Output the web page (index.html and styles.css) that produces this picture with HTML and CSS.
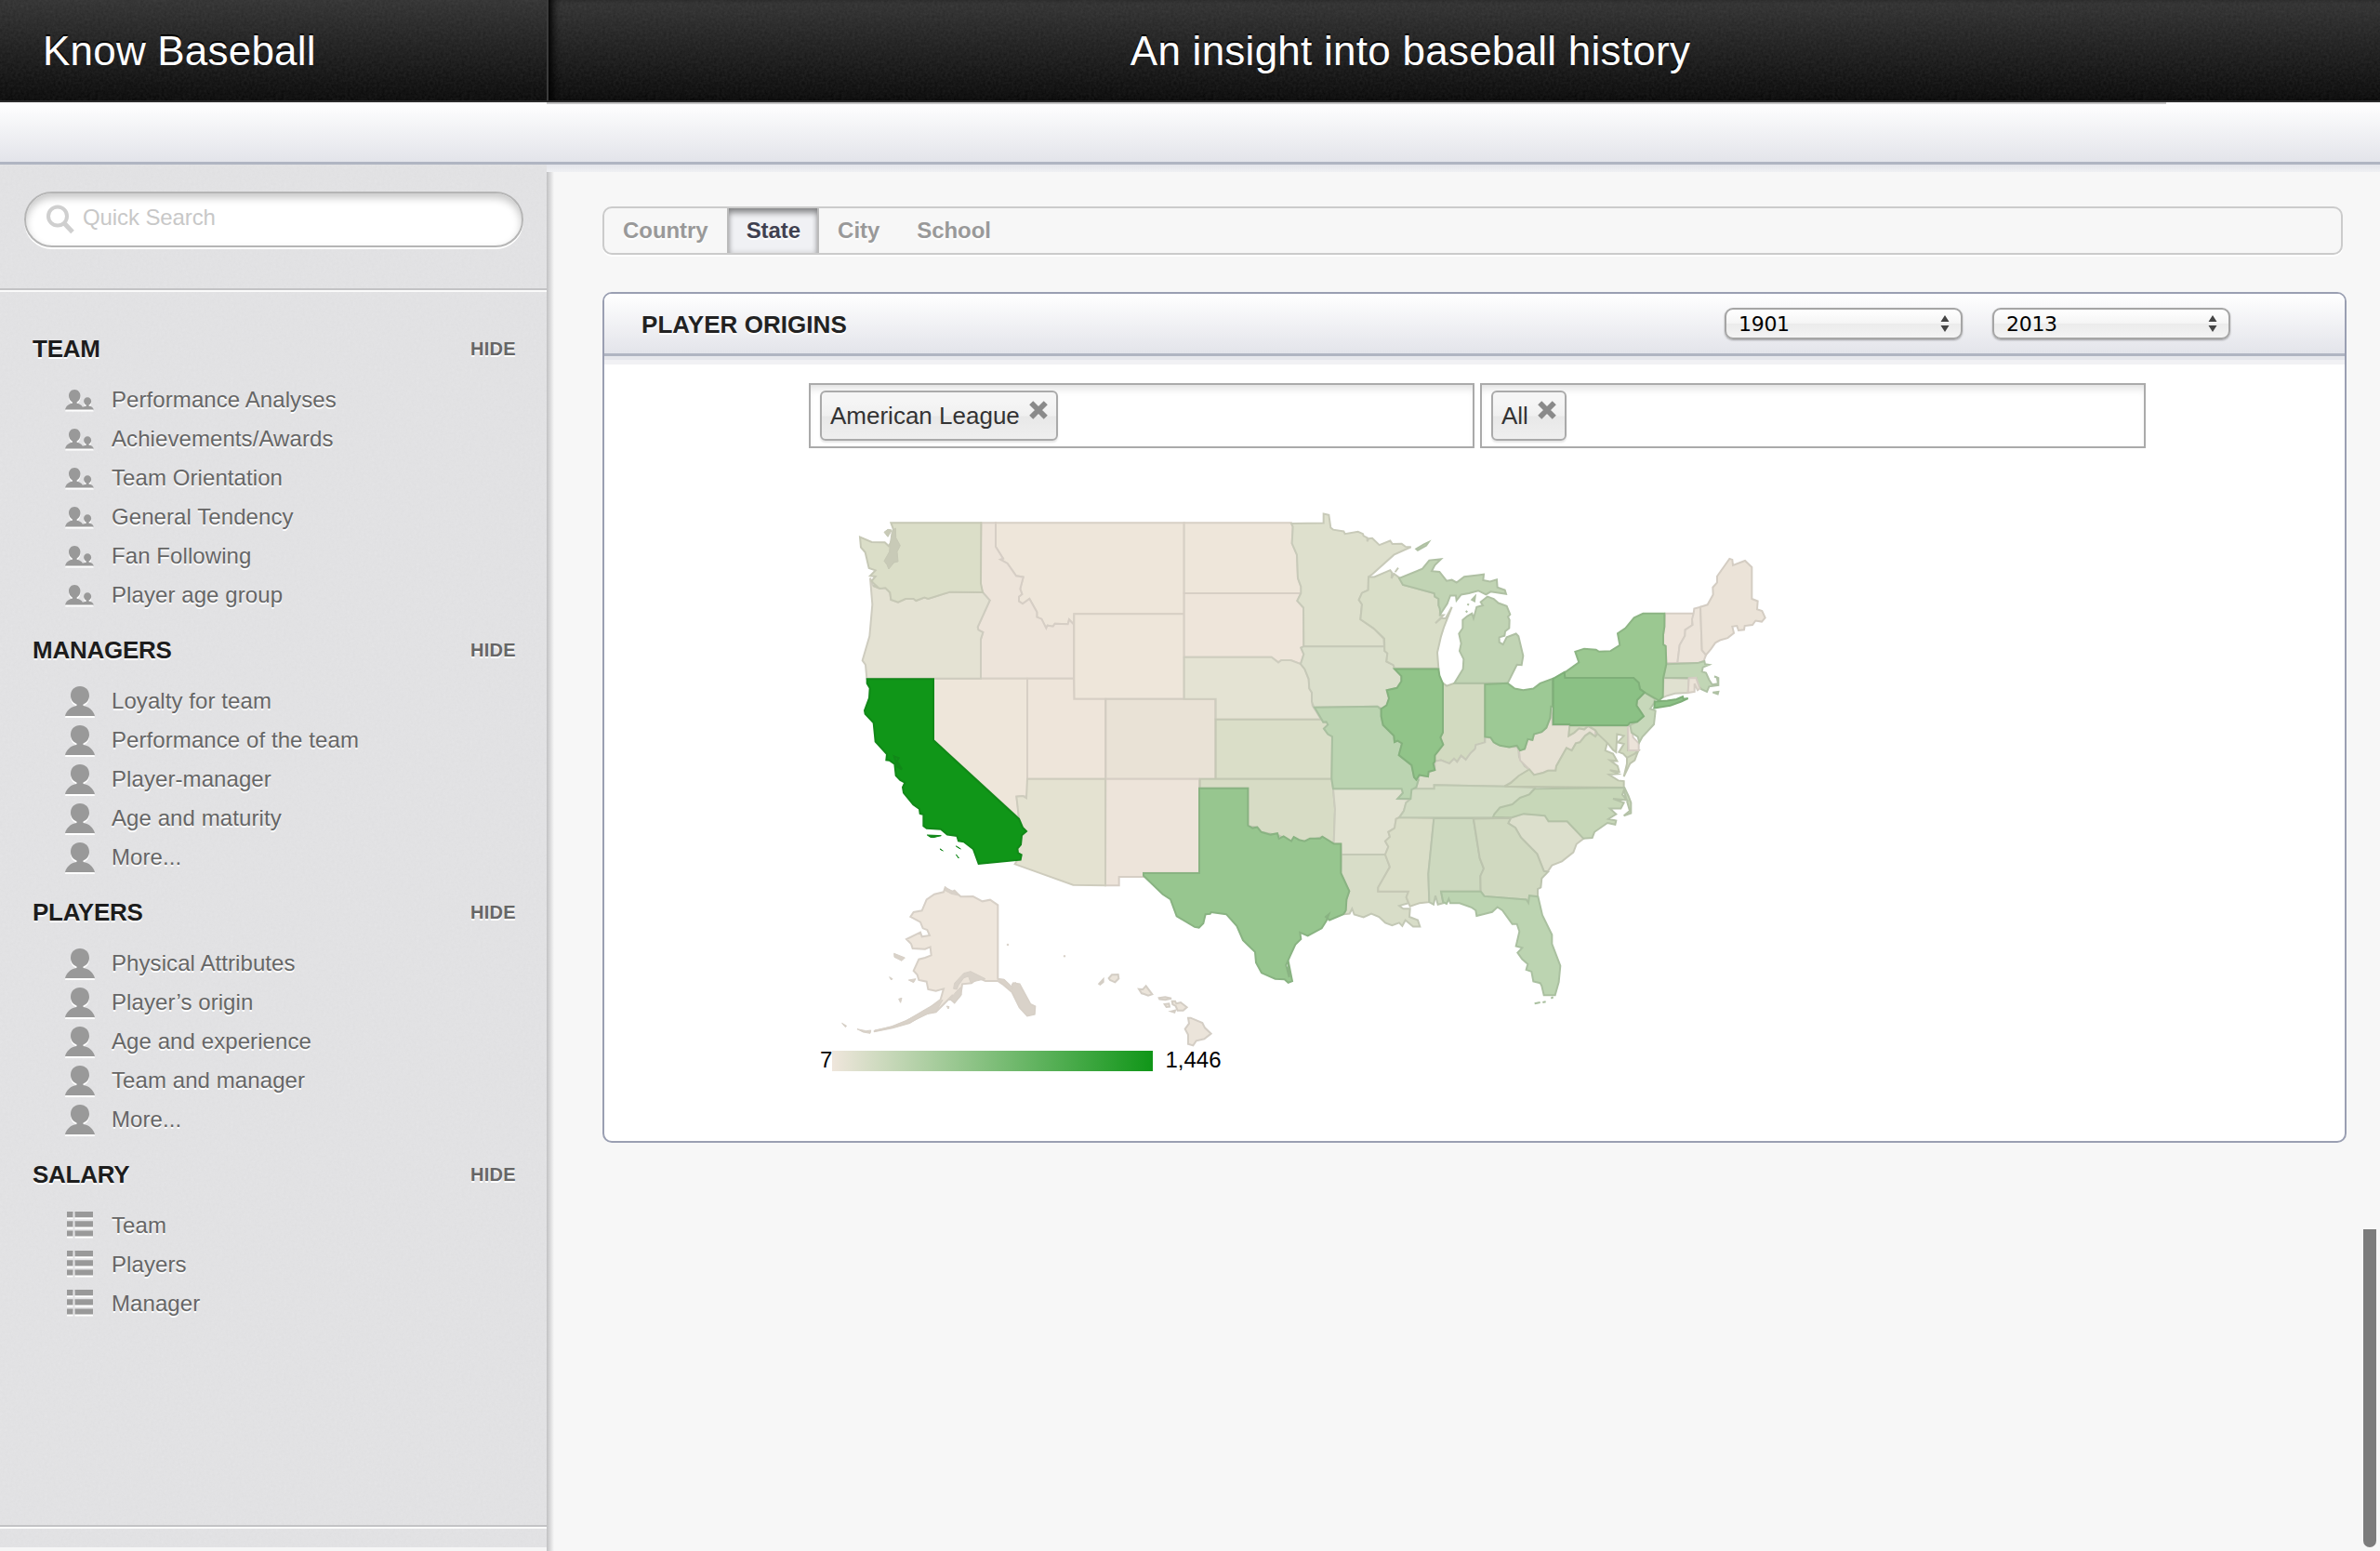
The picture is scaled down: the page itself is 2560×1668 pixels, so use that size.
FILE: index.html
```html
<!DOCTYPE html>
<html lang="en">
<head>
<meta charset="utf-8">
<title>Know Baseball</title>
<link rel="stylesheet" href="styles.css">
</head>
<body>
<svg class="defs" width="0" height="0" aria-hidden="true">
  <symbol id="i-team" viewBox="0 0 32 24"><path d="M10.500 0c3.800 0 6.500 3 6.500 7 0 3-1.500 5.500-4 7v1.500c3 .5 5.500 2 6.500 4l4-1V17.200c-1.600-.7-2.700-2.200-2.700-4.200 0-2.500 1.900-4.300 4.200-4.300s4.200 1.800 4.200 4.300c0 2-1.100 3.500-2.700 4.200v1c2.800.4 4.800 1.800 5.500 4.300H0c.8-4 3.800-6.300 8-7V14c-2.500-1.500-4-4-4-7 0-4 2.700-7 6.500-7z"/></symbol>
  <symbol id="i-user" viewBox="0 0 32 32"><path d="M16 0c6 0 10 4.300 10 10 0 4.500-2.500 8-6.500 9.500v1.500C26 22 30.500 26 32 32H0c1.500-6 6-10 12.500-11v-1.500C8.500 18 6 14.500 6 10 6 4.300 10 0 16 0z"/></symbol>
  <symbol id="i-list" viewBox="0 0 28 27"><path d="M0 0h6.500v6.200H0zM8.500 0H28v6.200H8.500zM0 10.200h6.500v6.200H0zM8.500 10.200H28v6.200H8.500zM0 20.400h6.500v6.200H0zM8.500 20.400H28v6.200H8.500z"/></symbol>
  <symbol id="i-x" viewBox="0 0 18 18"><path d="M2 2l14 14M16 2L2 16" stroke="#8a8a8a" stroke-width="5.200" fill="none"/></symbol>
</svg>

<header class="topbar">
  <h1 class="brand">Know Baseball</h1>
  <p class="tagline">An insight into baseball history</p>
</header>
<div class="subbar"></div>

<div class="layout">
  <aside class="sidebar">
    <div class="searchwrap">
      <div class="search">
        <svg width="32" height="32" viewBox="0 0 32 32"><circle cx="13" cy="12.500" r="10" fill="none" stroke="#cfcfcf" stroke-width="4"/><path d="M20 20l9 9.500" stroke="#cfcfcf" stroke-width="5"/></svg>
        <span>Quick Search</span>
      </div>
    </div>
    <nav class="menu">
      <section>
        <h2>TEAM <a>HIDE</a></h2>
        <ul class="team">
          <li><svg><use href="#i-team"/></svg>Performance Analyses</li>
          <li><svg><use href="#i-team"/></svg>Achievements/Awards</li>
          <li><svg><use href="#i-team"/></svg>Team Orientation</li>
          <li><svg><use href="#i-team"/></svg>General Tendency</li>
          <li><svg><use href="#i-team"/></svg>Fan Following</li>
          <li><svg><use href="#i-team"/></svg>Player age group</li>
        </ul>
      </section>
      <section>
        <h2>MANAGERS <a>HIDE</a></h2>
        <ul class="user">
          <li><svg><use href="#i-user"/></svg>Loyalty for team</li>
          <li><svg><use href="#i-user"/></svg>Performance of the team</li>
          <li><svg><use href="#i-user"/></svg>Player-manager</li>
          <li><svg><use href="#i-user"/></svg>Age and maturity</li>
          <li><svg><use href="#i-user"/></svg>More...</li>
        </ul>
      </section>
      <section>
        <h2>PLAYERS <a>HIDE</a></h2>
        <ul class="user">
          <li><svg><use href="#i-user"/></svg>Physical Attributes</li>
          <li><svg><use href="#i-user"/></svg>Player’s origin</li>
          <li><svg><use href="#i-user"/></svg>Age and experience</li>
          <li><svg><use href="#i-user"/></svg>Team and manager</li>
          <li><svg><use href="#i-user"/></svg>More...</li>
        </ul>
      </section>
      <section>
        <h2>SALARY <a>HIDE</a></h2>
        <ul class="list">
          <li><svg><use href="#i-list"/></svg>Team</li>
          <li><svg><use href="#i-list"/></svg>Players</li>
          <li><svg><use href="#i-list"/></svg>Manager</li>
        </ul>
      </section>
    </nav>
    <div class="sidefoot"></div>
  </aside>

  <main class="content">
    <div class="tabs">
      <span>Country</span><span class="active">State</span><span>City</span><span>School</span>
    </div>
    <section class="panel">
      <div class="panel-head">
        <h2>PLAYER ORIGINS</h2>
        <div class="select">1901<svg width="10" height="18" viewBox="0 0 10 18"><path d="M5 0l4.500 7h-9zM5 18l4.500-7h-9z"/></svg></div>
        <div class="select">2013<svg width="10" height="18" viewBox="0 0 10 18"><path d="M5 0l4.500 7h-9zM5 18l4.500-7h-9z"/></svg></div>
      </div>
      <div class="filters">
        <div class="field"><span class="chip">American League<svg><use href="#i-x"/></svg></span></div>
        <div class="field"><span class="chip">All<svg><use href="#i-x"/></svg></span></div>
      </div>
      <svg class="map" viewBox="860 530 1060 640" width="1060" height="640">
        <defs>
          <linearGradient id="scale"><stop offset="0" stop-color="#efe6dc"/><stop offset="1" stop-color="#109618"/></linearGradient>
        </defs>
        <!-- Alaska and Hawaii -->
        <g transform="translate(860 920) scale(.33333)" style="--c:#eee6dc">
          <path d="M470 103L490 118 500 113 520 133 560 132 590 148 615 143 640 160 640 398 660 402 685 425 690 412 710 415 745 480 760 487 758 512 735 517 710 490 685 440 655 415 640 405 600 405 575 395 555 412 525 415 520 450 500 475 485 462 495 450 440 505 400 512 355 540 300 556 240 568 300 552 345 534 410 499 455 465 465 430 440 437 415 432 410 407 385 402 380 385 368 372 385 335 405 330 425 322 422 295 405 302 365 300 360 285 345 270 390 248 395 262 420 258 412 240 398 235 390 215 358 198 368 183 395 178 410 142 435 125 465 118Z"/>
          <path class="isles" d="M686 414L698 410 712 425 745 480 760 487 758 512 735 517 710 490 688 440ZM640 399L660 400 686 425 684 438 655 413ZM497 430L500 412 530 380 552 374 600 398 570 405 552 410 545 390 530 395 512 420 508 432ZM520 425L522 450 500 475 487 462 505 440ZM468 112L480 108 500 118 520 130 490 124ZM462 466L440 505 420 508 355 540 300 556 240 568 242 564 300 552 345 533 410 494 450 474ZM305 316L340 330 330 340 306 328ZM290 392L300 398 296 402ZM352 402L375 398 368 410ZM320 463L330 460 326 475ZM137 541L152 550 148 554ZM186 560L215 566 230 564 228 574 205 570ZM475 486L483 488 480 495ZM670 286h4v4h-4zM853 323h4v4h-4z"/>
          <path style="--c:#ebe4da" d="M998 396L1008 385 1028 384 1030 397 1018 409 1002 402ZM967 414L980 400 980 408 970 416ZM1095 431L1108 432 1118 421 1138 448 1125 452 1112 447 1104 445ZM1160 460L1180 457 1200 461 1180 466 1162 464ZM1178 480L1192 478 1194 488 1184 489ZM1202 470L1212 470 1216 478 1230 474 1250 490 1238 500 1220 500 1214 486 1204 480ZM1200 503L1212 500 1210 506ZM1254 524L1262 524 1300 540 1308 556 1328 575 1306 592 1280 598 1270 613 1254 608 1254 578 1244 560 1257 542Z"/>
        </g>
        <!-- Pacific and mountain states -->
        <g transform="translate(900 530) scale(.33333)">
          <path style="--c:#eee6da" d="M513 97L1121 97 1121 391 766 391 765 425 750 409 746 424 704 422 698 431 680 428 676 437 661 407 646 401 646 385 622 342 600 358 588 350 588 335 598 327 592 310 602 272 579 268 551 228 528 215 537 212 513 174Z"/>
          <path style="--c:#ede4da" d="M466 97L513 97 513 174 537 212 528 215 551 228 579 268 602 272 592 310 598 327 588 335 588 350 600 358 622 342 646 385 646 401 661 407 676 437 680 428 698 431 704 422 746 424 750 409 765 425 765 599 465 599 465 472 472 450 457 442 455 433 494 347 471 321 463 292Z"/>
          <path style="--c:#eee6da" d="M766 391H1121V665H766Z"/>
          <path style="--c:#eee6da" d="M312 599L615 599 615 980 600 978 580 980 583 1000 588 1050 312 798Z"/>
          <path style="--c:#eee5da" d="M615 599L765 599 766 665 868 665 868 923 615 923Z"/>
          <path style="--c:#e9e2d6" d="M868 665H1222V923H868Z"/>
          <path style="--c:#ede4da" d="M868 923L1170 923 1170 1226 990 1226 990 1239 911 1239 911 1267 867 1267Z"/>
          <path style="--c:#e4e2d1" d="M615 923L867 923 867 1267 763 1265 575 1198 582 1186 593 1184 596 1168 585 1162 583 1148 594 1135 597 1105 612 1092 600 1080 588 1050 580 980 600 978 612 985Z"/>
          <path style="--c:#e4e2d3" d="M108 275L118 300 140 309 157 307 172 322 175 345 198 353 222 342 248 342 256 348 283 338 295 342 365 320 471 321 494 347 455 433 457 442 472 450 465 472 465 599 97 599 93 555 83 541 106 462 115 360Z"/>
          <path style="--c:#dbdec8" d="M175 97L466 97 465 292 471 321 365 320 295 342 283 338 256 348 248 342 222 342 198 353 175 345 172 322 157 307 140 309 118 300 128 300 112 285 125 270 108 268 125 250 104 243 92 192 78 176 75 143 113 159 155 160 168 172 180 150 183 118Z"/>
          <path class="isles" style="--c:#dbdec8" d="M172 165L178 125 190 114 191 145 205 170 195 190 198 222 185 225 168 246 162 232 153 220 170 190ZM153 127L165 118 178 120 165 142Z"/>
          <path style="--c:#109618" d="M98 601L312 601 312 798 588 1052 600 1080 612 1092 597 1105 594 1135 583 1148 585 1162 596 1168 593 1184 458 1197 441 1150 410 1126 393 1123 388 1107 357 1103 336 1085 290 1082 280 1075 280 1038 269 1035 267 1020 247 1006 216 968 213 950 220 935 205 927 191 912 187 875 170 863 160 862 162 843 125 803 119 742 92 713 90 702 105 662 107 630 98 615ZM185 850L200 856 194 866 210 892 196 884Z"/>
          <path class="isles" style="--c:#109618" d="M292 1104L315 1105 337 1106 312 1112 302 1111ZM333 1149L343 1155ZM385 1140L400 1149ZM385 1167L394 1179Z"/>
        </g>
        <!-- Central states -->
        <g transform="translate(1260 530) scale(.33333 .35077)">
          <path style="--c:#eee6da" d="M41 92L387 92 392 104 389 155 405 190 408 262 418 288 420 308 41 308Z"/>
          <path style="--c:#eee5da" d="M41 308L418 308 406 331 426 352 426 471 418 475 427 495 417 525 385 513 355 513 345 520 323 504 41 504Z"/>
          <path style="--c:#e4e3d3" d="M41 504L323 504 345 520 355 513 385 513 417 525 430 540 443 571 445 600 453 612 455 652 483 695 143 695 143 632 41 632Z"/>
          <path style="--c:#dadec8" d="M143 695L485 695 490 703 503 704 505 711 492 723 505 740 519 747 517 877 143 877Z"/>
          <path style="--c:#d7dcc5" d="M92 877L517 877 522 907 528 970 524 1076 487 1055 430 1068 390 1070 345 1050 290 1040 277 1025 247 1022 247 906 92 906Z"/>
          <path style="--c:#dee0cd" d="M387 94L491 93 491 64 508 68 514 107 522 113 556 118 560 126 602 119 618 126 620 132 632 138 632 149 637 140 648 139 671 160 706 147 713 157 743 156 755 165 773 166 718 190 650 248 636 258 635 298 615 307 605 328 615 342 610 388 652 415 685 447 687 471 427 471 426 352 406 331 418 308 418 288 408 262 405 190 389 155 392 104Z"/>
          <path style="--c:#dbdfcc" d="M427 471L687 471 688 485 697 492 694 517 716 528 720 538 742 562 742 578 728 598 695 605 702 630 694 652 680 662 665 655 460 658 453 640 453 612 445 600 443 571 430 540 417 525 427 495 418 475Z"/>
          <path style="--c:#e1e2d1" d="M522 907L743 907 747 920 730 938 770 940 757 950 750 975 735 995 725 1000 720 1028 700 1040 705 1055 690 1068 700 1085 690 1109 548 1109 547 1076 524 1076 528 970Z"/>
          <path style="--c:#d8ddc8" d="M548 1109L690 1109 705 1147 685 1180 667 1210 667 1222 765 1222 758 1240 765 1258 735 1266 748 1275 770 1275 768 1300 795 1310 802 1330 780 1330 755 1310 745 1328 735 1318 712 1326 690 1318 670 1300 645 1290 620 1301 590 1293 583 1275 575 1290 560 1292 565 1247 574 1221 547 1166Z"/>
          <path style="--c:#dadec8" d="M735 995L847 998 829 1168 832 1255 800 1258 770 1268 758 1240 765 1222 667 1222 667 1210 685 1180 705 1147 690 1109 700 1085 690 1068 705 1055 700 1040 720 1028 725 1000Z"/>
          <path style="--c:#d9dec8" d="M636 258L655 258 706 237 712 245 710 262 718 248 738 262 747 282 848 308 850 318 862 325 862 345 868 352 866 375 878 375 852 400 870 385 885 385 905 350 880 410 870 440 858 490 862 538 720 538 716 528 694 517 697 492 688 485 687 447 652 415 610 388 615 342 605 328 615 307 635 298ZM722 243L732 230"/>
          <path style="--c:#d2dac0" d="M876 583L888 592 913 584 1012 584 1012 765 990 773 980 785 950 818 935 806 922 825 912 815 897 830 870 820 850 823 850 805 877 772 868 750 876 735Z"/>
          <path style="--c:#dbdecb" d="M797 880L800 865 828 870 830 855 850 850 850 823 870 820 897 830 912 815 922 825 935 806 950 818 965 798 980 785 982 773 1012 765 1012 748 1030 752 1048 770 1090 780 1115 778 1120 788 1122 810 1140 838 1155 848 1120 870 1092 890 1075 900 848 896 848 907 775 907 790 903Z"/>
          <path style="--c:#d2dcc4" d="M772 907L848 907 848 896 1075 900 1173 904 1155 925 1125 938 1100 960 1060 970 1038 996 735 996 750 975 757 950 770 940Z"/>
          <path style="--c:#cdd9bf" d="M847 998L974 998 995 1120 1008 1152 997 1175 998 1222 870 1222 877 1258 860 1262 852 1235 846 1262 832 1255 829 1168Z"/>
          <path style="--c:#c1d4b4" d="M735 262L810 233 832 207 870 203 850 222 840 240 865 242 888 270 905 267 920 275 945 257 990 252 1008 250 1006 268 1028 272 1050 266 1052 290 1076 298 1080 310 1030 303 1015 312 990 300 960 308 935 312 920 330 918 315 900 315 890 340 868 372 866 355 862 345 862 325 850 318 848 308 747 282ZM790 172L815 158 830 151 822 162 795 176ZM913 584L941 540 943 510 930 485 935 462 928 432 940 415 940 390 955 378 970 370 975 385 985 350 1005 345 998 335 1020 318 1040 325 1055 338 1082 347 1093 373 1086 380 1091 390 1090 415 1077 425 1075 438 1058 443 1058 458 1070 465 1082 443 1112 432 1120 440 1135 500 1130 528 1115 527 1085 584ZM970 328L980 318 978 332ZM955 341L960 344ZM950 362L955 366Z"/>
          <path style="--c:#bbd4b1" d="M462 658L665 655 677 665 677 685 683 712 718 745 720 764 730 760 744 768 734 804 775 835 783 872 797 880 790 903 775 910 772 938 730 938 747 920 743 907 522 907 517 877 519 747 505 740 492 723 505 711 500 702 490 703Z"/>
          <path style="--c:#91c489" d="M720 540L862 540 865 560 876 585 876 735 868 750 877 772 850 805 850 823 845 830 850 850 830 855 828 870 800 865 790 880 783 872 775 835 734 804 744 768 730 760 720 764 718 745 683 712 677 685 677 662 694 652 702 630 695 605 728 598 742 578 742 562Z"/>
          <path style="--c:#97c68f" d="M90 906L247 906 247 1020 262 1028 277 1025 290 1040 320 1048 342 1044 347 1060 362 1053 387 1068 395 1055 412 1064 430 1068 447 1060 480 1060 487 1054 524 1076 547 1076 547 1166 574 1221 565 1247 563 1280 555 1292 510 1310 498 1300 508 1292 500 1312 485 1335 440 1358 415 1348 418 1368 400 1385 383 1420 370 1448 380 1485 377 1435 390 1497 377 1502 365 1492 335 1490 291 1472 273 1440 270 1408 231 1372 211 1328 177 1292 128 1286 125 1291 110 1292 103 1320 89 1333 75 1331 17 1298 -3 1246 -28 1231 -90 1174 -90 1166 90 1166Z"/>
        </g>
        <!-- Eastern seaboard -->
        <g transform="translate(1580 530) scale(.33333 .35077)">
          <path style="--c:#ede4da" d="M633 370L725 370 720 402 722 405 698 420 697 438 680 467 673 522 637 522 635 470 627 465 627 435 631 410Z"/>
          <path style="--c:#ece4da" d="M725 370L727 355 747 350 752 482 765 497 758 515 738 522 673 522 680 467 697 438 698 420 722 405 720 388Z"/>
          <path style="--c:#ebe3d8" d="M747 350L770 343 788 312 787 290 801 275 801 256 841 202 850 205 852 222 891 208 913 228 913 325 932 332 930 357 946 362 956 383 945 395 925 392 915 405 890 408 888 420 870 422 865 408 850 410 855 430 835 445 810 452 795 460 782 478 765 497 752 482Z"/>
          <path style="--c:#e6e1d4" d="M265 655L270 712 325 712 322 745 340 735 355 722 372 725 385 715 408 728 408 747 390 735 375 745 358 765 345 768 332 790 315 782 282 838 280 852 255 852 240 858 210 865 195 848 165 820 162 790 180 785 190 755 205 758 210 740 235 733 250 720 265 685Z"/>
          <path style="--c:#e0e1d0" d="M628 567L710 570 707 613 665 615 640 622 620 630 627 600Z"/>
          <path style="--c:#dcdfcc" d="M135 997L177 984 245 988 257 1007 317 1007 370 1060 347 1077 337 1102 300 1130 268 1142 255 1160 242 1160 220 1107 168 1057 150 1027 127 1013Z"/>
          <path style="--c:#d2dac0" d="M315 782L332 790 345 768 358 765 375 745 390 735 408 747 415 738 448 760 440 790 465 800 478 822 455 820 480 838 485 855 455 850 482 862 452 864 482 882 500 884 500 904 115 900 135 890 160 868 195 848 210 865 240 858 255 852 280 852 282 838ZM510 790L547 790 535 820 520 830 500 870 510 830Z"/>
          <path style="--c:#d2dac0" d="M325 714L513 714 513 790 547 790 535 800 510 812 498 800 484 795 500 770 480 765 500 745 478 740 475 795 465 788 448 768 415 738 408 728 385 715 372 725 355 722 340 735 322 745Z"/>
          <path style="--c:#ece3d9" d="M513 714L525 715 530 750 548 768 548 790 515 790Z"/>
          <path style="--c:#c7d7b8" d="M213 907L502 904 515 930 523 950 523 982 500 990 519 975 510 945 500 912 495 925 510 942 465 938 500 950 490 968 455 968 475 985 450 1000 475 1005 472 1017 447 1012 405 1040 398 1058 370 1060 317 1007 257 1007 245 990 177 984 135 996 78 994 82 985 100 965 140 955 165 935 195 925Z"/>
          <path style="--c:#d0d9c0" d="M15 999L135 997 127 1013 150 1027 168 1057 220 1107 242 1160 255 1162 235 1182 232 1210 222 1215 222 1238 195 1237 192 1257 185 1247 50 1237 38 1222 37 1175 48 1152 35 1120Z"/>
          <path style="--c:#c7d8ba" d="M567 612L600 632 597 645 585 662 602 668 597 710 560 748 550 765 545 748 525 735 520 712 543 702 564 685 541 652 543 635Z"/>
          <path style="--c:#c1d6b5" d="M637 525L738 522 760 516 762 525 775 527 755 535 752 548 765 552 775 573 785 588 804 585 800 565 792 563 805 568 805 590 775 594 768 610 750 602 738 590 733 567 628 567ZM787 612L805 610 803 617Z"/>
          <path style="--c:#ebe3d8" d="M710 568L733 567 745 600 738 605 728 585 728 610 707 613Z"/>
          <path style="--c:#bcd4b1" d="M-90 1222L38 1222 50 1237 185 1247 192 1257 195 1235 223 1238 237 1295 268 1355 268 1383 295 1450 290 1500 278 1540 242 1540 235 1512 230 1503 208 1498 202 1468 185 1462 190 1445 172 1430 157 1410 172 1395 152 1390 163 1345 155 1322 140 1322 108 1280 92 1270 75 1285 25 1297 22 1280 10 1272 -30 1258 -60 1258 -65 1245 -72 1260 -83 1255ZM238 1562L248 1560ZM265 1550L272 1546ZM212 1566L230 1562Z"/>
          <path style="--c:#9dc995" d="M52 587L125 584 148 600 175 605 208 600 230 584 270 570 270 655 265 655 262 690 250 720 235 733 210 740 205 758 190 755 180 785 165 790 155 775 130 780 100 775 80 765 70 750 52 748Z"/>
          <path style="--c:#9bc891" d="M308 552L355 520 343 487 372 478 410 481 420 487 457 485 487 467 480 431 505 415 533 383 562 370 631 370 631 410 627 435 627 465 635 470 637 525 627 568 626 625 613 637 600 630 567 612 552 602 548 582 531 567 310 567Z"/>
          <path style="--c:#8bc185" d="M600 640L640 637 670 633 690 625 692 632 707 630 685 640 650 652 598 660ZM272 570L308 550 310 567 531 567 548 582 552 602 567 612 543 635 541 652 564 685 543 702 520 705 512 713 327 713 325 710 272 710Z"/>
        </g>
        <rect x="895" y="1130" width="345" height="22" fill="url(#scale)"/>
        <g class="legend"><text x="882" y="1148">7</text><text x="1253.500" y="1148">1,446</text></g>
      </svg>
    </section>
  </main>
</div>
<div class="scrollbar"></div>
</body>
</html>
```
FILE: styles.css
```css
* { box-sizing: border-box; margin: 0; padding: 0; }
body {
  height: 1668px;
  display: flex;
  flex-direction: column;
  overflow: hidden;
  background: #f7f7f7;
  font-family: "Liberation Sans", Arial, sans-serif;
  font-size: 24px;
  color: #222;
  --grain: url("data:image/svg+xml,%3Csvg xmlns='http://www.w3.org/2000/svg' width='200' height='200'%3E%3Cfilter id='n'%3E%3CfeTurbulence type='fractalNoise' baseFrequency='.35' numOctaves='2' stitchTiles='stitch'/%3E%3CfeColorMatrix values='0 0 0 0 .5 0 0 0 0 .5 0 0 0 0 .5 0 0 0 .12 0'/%3E%3C/filter%3E%3Crect width='200' height='200' filter='url(%23n)'/%3E%3C/svg%3E");
}
.defs { position: absolute; }

.topbar {
  height: 110px;
  flex: none;
  display: flex;
  color: #fff;
  font-size: 44px;
  line-height: 110px;
  background: var(--grain), linear-gradient(#2f2f2f, #050505);
  border-bottom: 2px solid #2b2b2b;
  text-shadow: 0 -2px 0 #000;
}
.brand {
  width: 588px;
  padding-left: 46px;
  font-size: 44px;
  font-weight: normal;
  letter-spacing: .2px;
}
.tagline {
  flex: 1;
  padding-right: 116px;
  text-align: center;
  letter-spacing: .25px;
  border-left: 2px solid #3b3b3b;
  box-shadow: inset 8px 0 8px -4px #000;
}
.subbar {
  height: 67px;
  flex: none;
  background:
    linear-gradient(#c6c6c6, #c6c6c6) 588px 0 / 1742px 2px no-repeat,
    linear-gradient(#fff, #e3e4ea);
  border-bottom: 3px solid #b0b5c2;
}

.layout { flex: 1; display: flex; min-height: 0; }
.sidebar {
  width: 588px;
  display: flex;
  flex-direction: column;
  background: var(--grain), #e4e4e6;
  border-bottom: 4px solid #f5f5f5;
}
.searchwrap {
  height: 135px;
  flex: none;
  padding: 29px 25px 0 26px;
  border-bottom: 2px solid #c3c3c5;
  box-shadow: 0 2px 0 #fafafa;
}
.search {
  height: 60px;
  display: flex;
  align-items: center;
  gap: 8px;
  padding: 0 0 0 21px;
  border: 2px solid #b5b5b5;
  border-radius: 30px;
  background: #fff;
  box-shadow: inset 0 5px 8px rgba(0,0,0,.22), 0 2px 0 #fff;
  color: #c8c8c8;
}
.search span { padding-bottom: 4px; letter-spacing: -.1px; }
.menu { flex: 1; padding-top: 42px; text-shadow: 0 2px 0 #fff; }
.menu section { margin-bottom: 17px; }
.menu h2 {
  display: flex;
  justify-content: space-between;
  padding: 0 33px 0 35px;
  font-size: 26px;
  line-height: 42px;
  letter-spacing: -.25px;
  color: #1d1d1d;
}
.menu h2 a { font-size: 20px; letter-spacing: .3px; color: #666; }
.menu ul { list-style: none; padding: 13px 0 0 70px; }
.menu li {
  height: 42px;
  display: flex;
  line-height: 42px;
  letter-spacing: .08px;
  color: #666;
}
.menu svg { fill: #999; filter: drop-shadow(0 2px 0 #fff); }
.team svg { width: 31px; height: 23px; margin: 10px 19px 0 0; }
.user svg { width: 32px; height: 32px; margin: 5px 18px 0 0; }
.list svg { width: 28px; height: 27px; margin: 6px 20px 0 2px; }
.sidefoot {
  height: 24px;
  border-top: 2px solid #c3c3c5;
  box-shadow: inset 0 2px 0 #fafafa;
}

.content {
  flex: 1;
  padding: 45px 36px 0 60px;
  background:
    linear-gradient(#e3e4ea, #eff0f3) 0 0 / 100% 8px no-repeat,
    linear-gradient(90deg, #c0c0c2, #f7f7f7) 0 5px / 8px 100% no-repeat,
    #f7f7f7;
}
.tabs {
  height: 52px;
  margin-right: 4px;
  display: flex;
  border: 2px solid #cbcbcb;
  border-radius: 10px;
  box-shadow: 0 2px 0 #fff;
  font-weight: bold;
  line-height: 48px;
  letter-spacing: -.05px;
  color: #999;
  text-shadow: 0 2px 0 #fff;
}
.tabs span { padding: 0 20px; }
.tabs .active {
  color: #3f4150;
  background: #f0f1f4;
  border: solid #bbb;
  border-width: 0 2px;
  padding: 0 18px 0 19px;
  box-shadow: inset 0 6px 6px -1px rgba(0,0,0,.4), inset 0 0 6px rgba(0,0,0,.15);
}
.panel {
  height: 915px;
  margin-top: 40px;
  border: 2px solid #9a9fb2;
  border-radius: 10px;
  background: #fff;
}
.panel-head {
  height: 67px;
  display: flex;
  align-items: center;
  padding-right: 123px;
  border-radius: 8px 8px 0 0;
  background: linear-gradient(#fff, #e3e4ea);
  border-bottom: 3px solid #b0b5c2;
  box-shadow: 0 4px 0 #e6e7ec, 0 9px 0 #f1f1f4;
}
.panel-head h2 {
  flex: 1;
  padding: 2px 0 0 40px;
  font-size: 26px;
  letter-spacing: .05px;
  text-shadow: 0 2px 0 #fff;
}
.select {
  width: 256px;
  height: 34px;
  margin-left: 32px;
  display: flex;
  align-items: center;
  justify-content: space-between;
  padding: 0 12px 0 13px;
  border: 2px solid #a5a5a5;
  border-radius: 9px;
  background: linear-gradient(#fff, #f5f5f5 49%, #ebebeb 51%, #f4f4f4);
  box-shadow: 0 1px 2px rgba(0,0,0,.3);
  font: 22px "DejaVu Sans", sans-serif;
  letter-spacing: -.3px;
  color: #000;
}
.select svg { fill: #444; }
.filters { display: flex; gap: 6px; padding: 29px 0 0 220px; }
.field {
  width: 716px;
  height: 70px;
  padding: 6px 10px;
  border: 2px solid #aaa;
  box-shadow: inset 0 8px 8px -4px rgba(0,0,0,.12);
}
.chip {
  display: inline-flex;
  height: 54px;
  padding: 0 9px;
  border: 2px solid #aaa;
  border-radius: 6px;
  background: linear-gradient(#f5f5f5 20%, #f0f0f0 50%, #e8e8e8 52%, #efefef);
  box-shadow: 0 2px 2px rgba(0,0,0,.1);
  font-size: 26px;
  line-height: 50px;
  color: #333;
}
.chip svg { width: 20px; height: 20px; margin: 9px 0 0 10px; }
.map { display: block; margin: 48px 0 0 210px; }
.map path {
  fill: var(--c);
  stroke: color-mix(in srgb, var(--c) 89%, #1a1a1a);
  stroke-width: 2px;
  vector-effect: non-scaling-stroke;
}
.map .isles { fill: color-mix(in srgb, var(--c) 90%, #1a1a1a); stroke-width: 1px; }
.legend { font-size: 24px; fill: #000; }

/* Overlay scroll thumb */
.scrollbar {
  position: absolute;
  right: 4px;
  top: 1322px;
  width: 14px;
  height: 342px;
  border-radius: 0 0 7px 7px;
  background: #7c7c7c;
}
```
